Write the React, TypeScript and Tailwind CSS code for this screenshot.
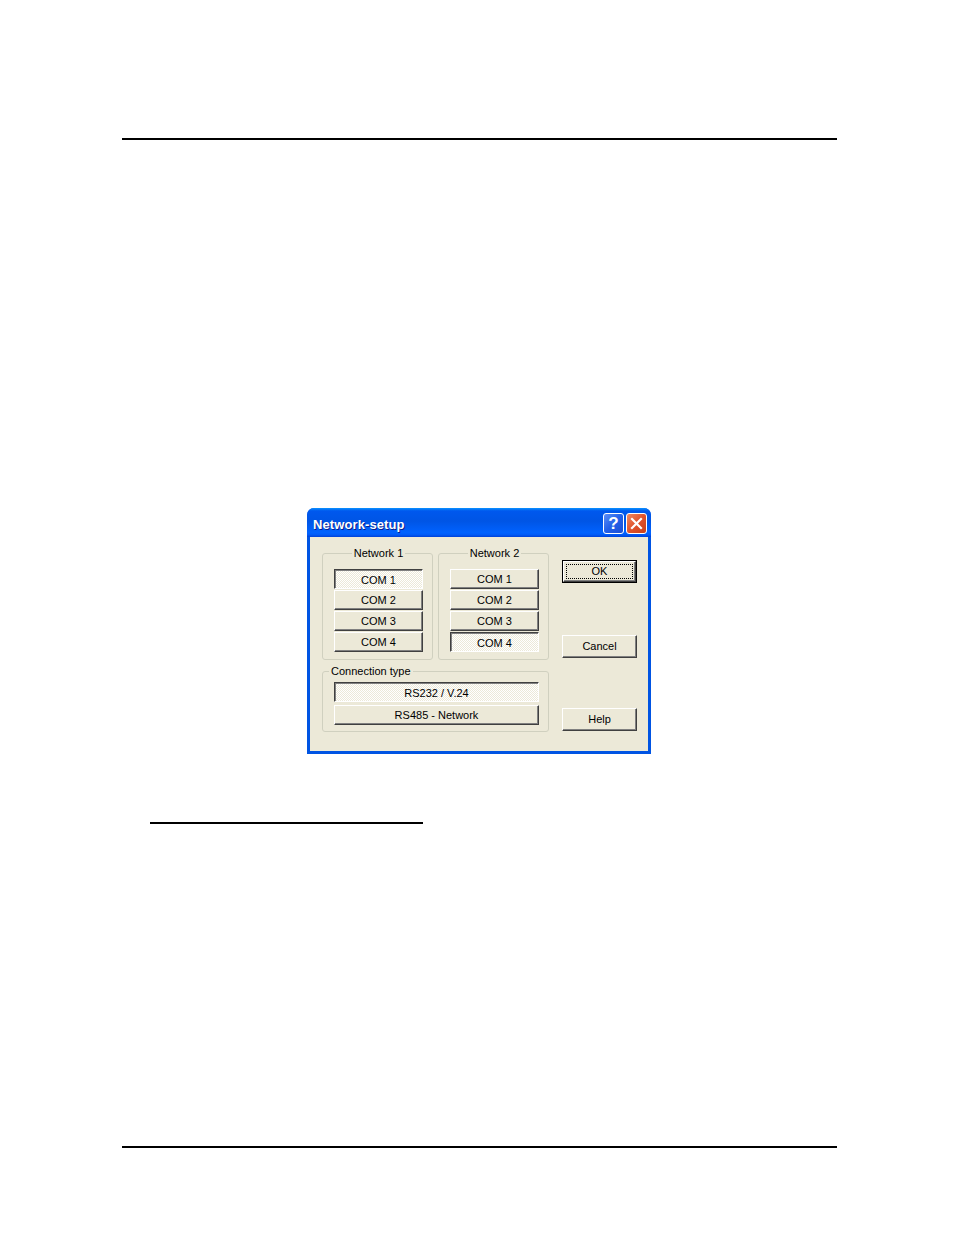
import React from 'react';

const raised =
  'border-t border-l border-t-white border-l-white border-b border-r border-b-[#404040] border-r-[#404040] shadow-[inset_-1px_-1px_#808080] bg-[#ECE9D8]';
const sunken =
  'border-t border-l border-t-[#404040] border-l-[#404040] border-b border-r border-b-white border-r-white shadow-[inset_1px_1px_#808080] bg-[repeating-conic-gradient(#ffffff_0_25%,#ECE9D8_0_50%)] bg-[length:2px_2px]';

const Btn: React.FC<{ label: string; pressed?: boolean; className?: string }> = ({ label, pressed, className = '' }) => (
  <div
    className={`${pressed ? sunken : raised} ${className} flex items-center justify-center text-[11px] leading-none text-black`}
  >
    <span className={pressed ? 'translate-y-[1px]' : ''}>{label}</span>
  </div>
);

const Group: React.FC<{ title: string; center?: boolean; className?: string; children: React.ReactNode }> = ({
  title,
  center,
  className = '',
  children,
}) => (
  <fieldset className={`border border-[#D0D0BF] rounded-[3px] ${className}`}>
    <legend className={`px-[2px] text-[11px] leading-[13px] text-black ${center ? 'mx-auto' : 'ml-[-5px]'}`}>{title}</legend>
    {children}
  </fieldset>
);

export default function App() {
  return (
    <div className="min-h-[1235px] bg-white pt-[138px] font-['Liberation_Sans',Arial,sans-serif]">
      <div className="ml-[122px] w-[715px] h-[2px] bg-black" />

      {/* dialog */}
      <div className="ml-[307px] mt-[368px] w-[344px] h-[246px] flex flex-col rounded-t-[7px] bg-[#0054E3] overflow-hidden">
        <div className="h-[29px] shrink-0 flex items-center justify-between pl-[6px] pr-[4px] bg-[linear-gradient(to_bottom,#0A93FF_0%,#0058EE_10%,#0055E5_45%,#0062FF_85%,#005BF7_92%,#0041D8_100%)]">
          <span className="pt-[4px] text-[13px] font-bold text-white [text-shadow:1px_1px_#0A1E8C] tracking-[0.1px]">Network-setup</span>
          <div className="flex gap-[2px] pt-[1px]">
            <div className="w-[21px] h-[21px] rounded-[3px] border border-white bg-[linear-gradient(135deg,#5C8FF7_0%,#2360E8_50%,#1C4FD5_100%)] flex items-center justify-center text-white text-[17px] font-bold leading-none">
              ?
            </div>
            <div className="w-[21px] h-[21px] rounded-[3px] border border-white bg-[linear-gradient(135deg,#F08A63_0%,#E0532D_50%,#C8401A_100%)] flex items-center justify-center">
              <svg width="13" height="13" viewBox="0 0 13 13">
                <path d="M2 2 L11 11 M11 2 L2 11" stroke="white" strokeWidth="2.2" strokeLinecap="square" />
              </svg>
            </div>
          </div>
        </div>

        <div className="flex-1 mx-[3px] mb-[3px] bg-[#ECE9D8] flex pl-[12px] pt-[10px]">
          <div className="w-[227px] flex flex-col">
            <div className="flex gap-[5px]">
              <Group title="Network 1" center className="w-[111px] pl-[11px] pr-[9px] pt-[9px] pb-[7px]">
                <div className="flex flex-col gap-[1px]">
                  <Btn label="COM 1" pressed className="h-[20px]" />
                  <Btn label="COM 2" className="h-[20px]" />
                  <Btn label="COM 3" className="h-[20px]" />
                  <Btn label="COM 4" className="h-[20px]" />
                </div>
              </Group>
              <Group title="Network 2" center className="w-[111px] pl-[11px] pr-[9px] pt-[9px] pb-[7px]">
                <div className="flex flex-col gap-[1px]">
                  <Btn label="COM 1" className="h-[20px]" />
                  <Btn label="COM 2" className="h-[20px]" />
                  <Btn label="COM 3" className="h-[20px]" />
                  <Btn label="COM 4" pressed className="h-[20px]" />
                </div>
              </Group>
            </div>
            <Group title="Connection type" className="mt-[5px] pl-[11px] pr-[9px] pt-[4px] pb-[6px]">
              <div className="flex flex-col gap-[3px]">
                <Btn label="RS232 / V.24" pressed className="h-[20px]" />
                <Btn label="RS485 - Network" className="h-[20px]" />
              </div>
            </Group>
          </div>

          <div className="ml-[13px] w-[75px] flex flex-col pt-[13px]">
            <div className="h-[23px] border border-black">
              <div className={`${raised} h-full flex items-center justify-center p-[2px]`}>
                <div className="w-full h-full border border-dotted border-black flex items-center justify-center text-[11px] leading-none">
                  OK
                </div>
              </div>
            </div>
            <Btn label="Cancel" className="h-[23px] mt-[52px]" />
            <Btn label="Help" className="h-[23px] mt-[50px]" />
          </div>
        </div>
      </div>

      <div className="ml-[150px] mt-[68px] w-[273px] h-[2px] bg-black" />
      <div className="ml-[122px] mt-[322px] w-[715px] h-[2px] bg-black" />
    </div>
  );
}
